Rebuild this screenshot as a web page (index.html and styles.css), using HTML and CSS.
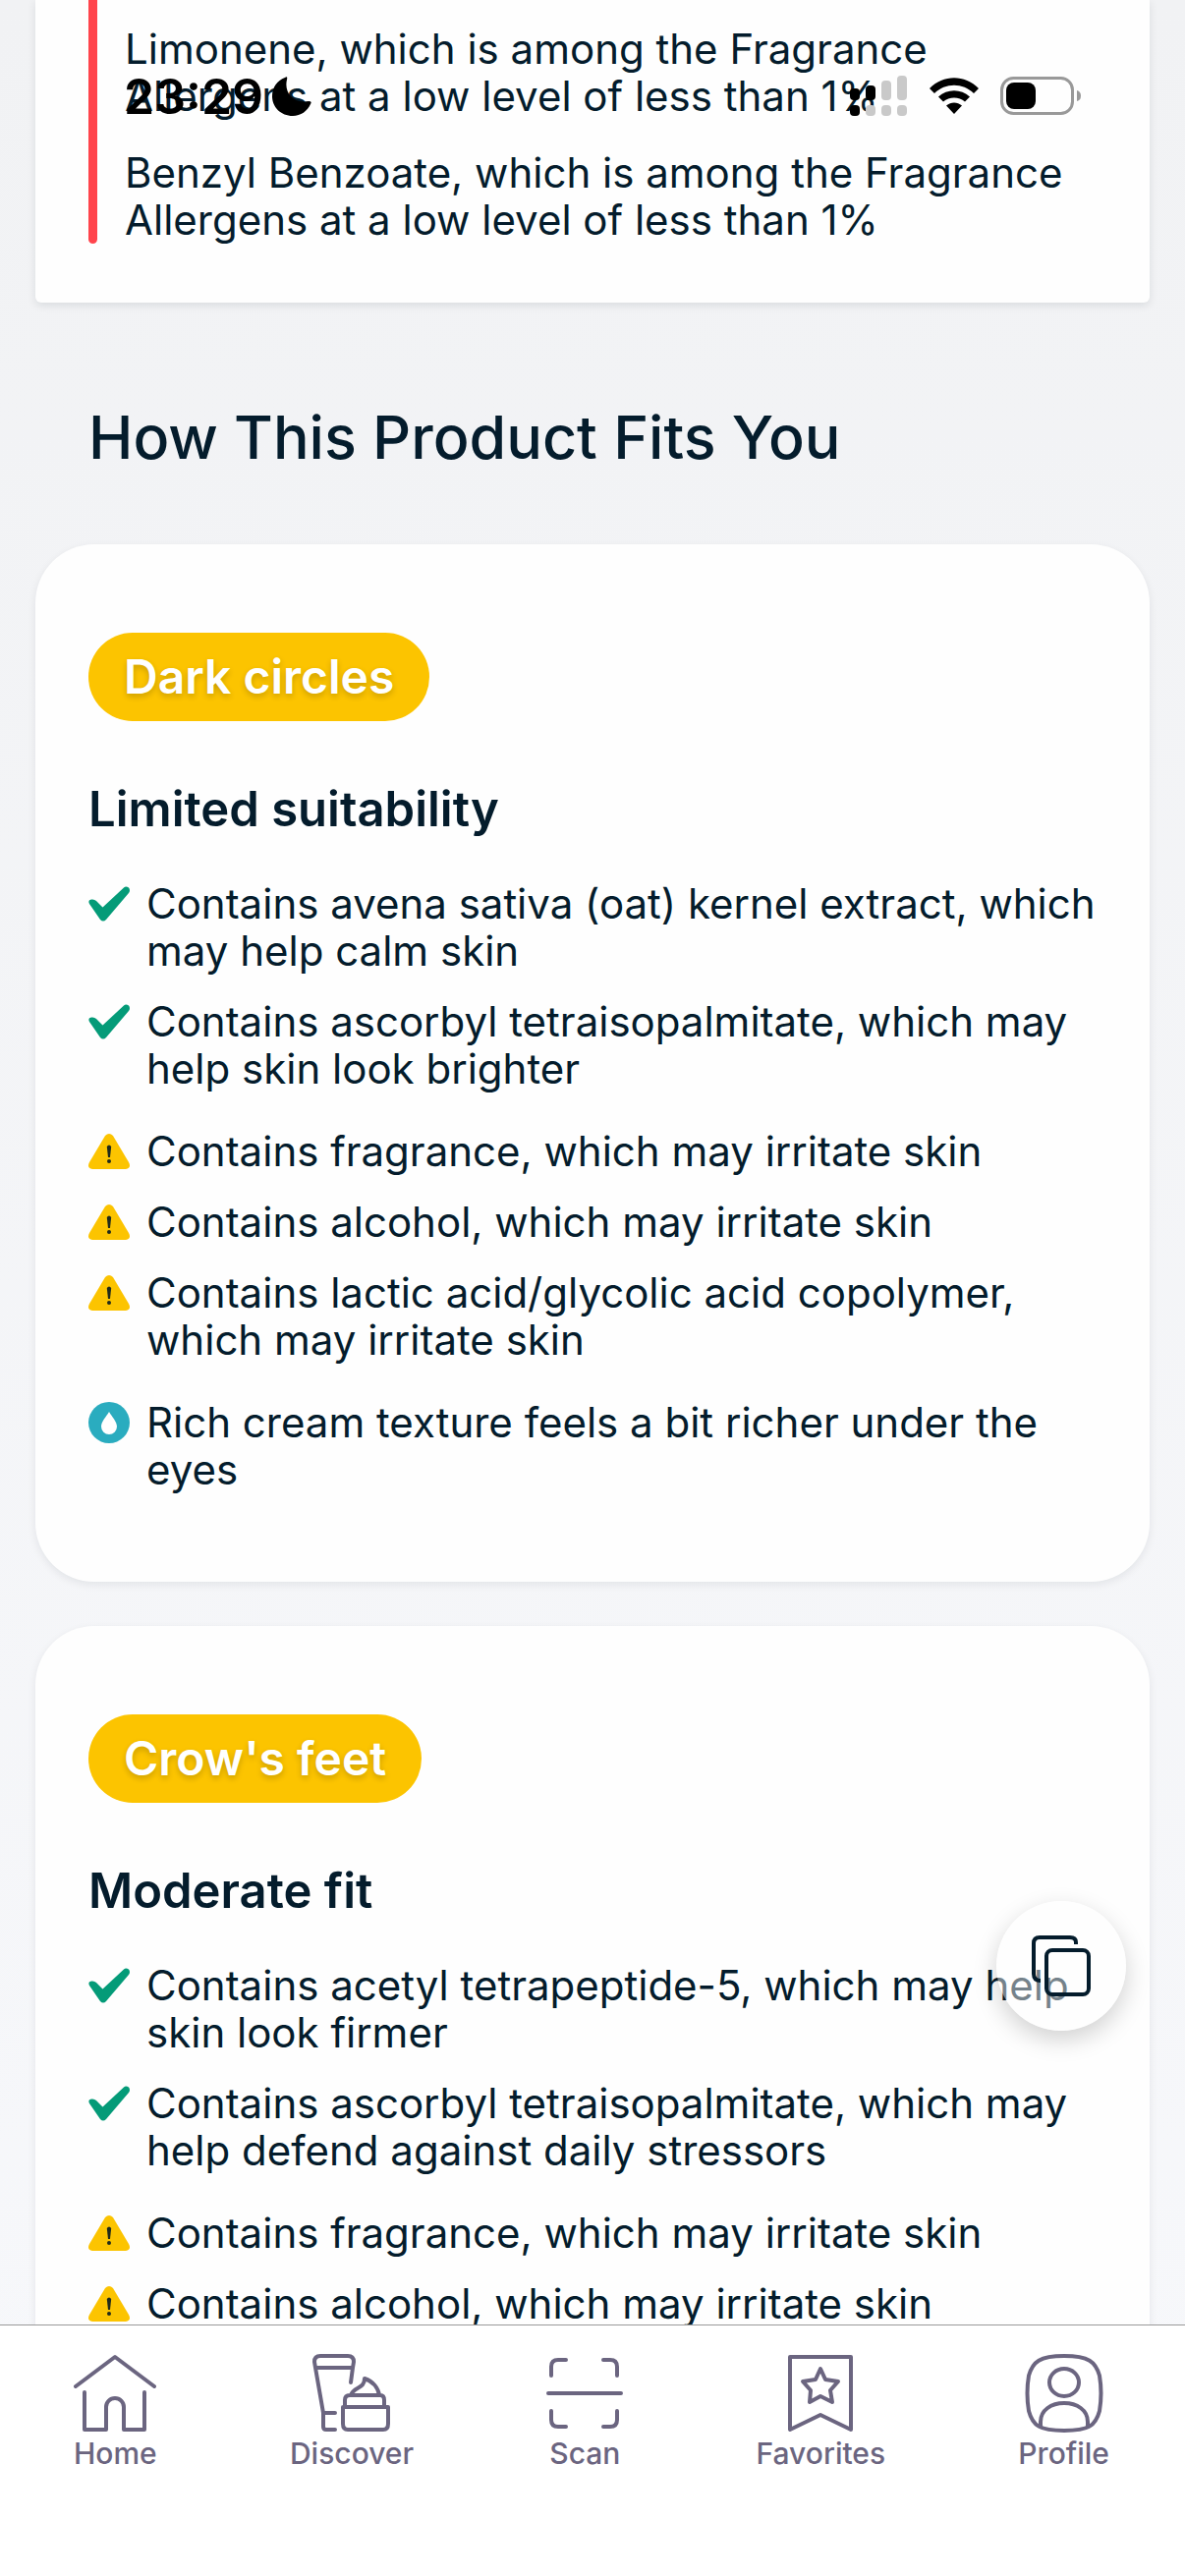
FILE: index.html
```html
<!DOCTYPE html>
<html lang="en">
<head>
    <meta charset="UTF-8">
    <meta name="viewport" content="width=device-width, initial-scale=1.0">
    <title>Product fit</title>
    <link rel="stylesheet" href="styles.css">
</head>
<body>
    <!-- Shared list icons -->
    <svg class="sprite" aria-hidden="true">
        <symbol id="check" viewBox="0 0 42 36">
            <path fill="#049b78" d="M1 18Q-1 14 3 13.500Q6 13 8 15L14.500 21.500L36 1.500Q38 -.5 41 1.500Q43 4 41 7L18 34Q15 37 12 34Z"/>
        </symbol>
        <symbol id="warning" viewBox="0 0 42 36">
            <path fill="#fcc400" d="M17 2Q21-2 25 2L41 29Q44 35 38 36H4Q-2 35 1 29Z"/>
            <path fill="#1f2a1c" d="M18.800 13Q21 10 23.200 13L22 24H20Z"/>
            <circle fill="#1f2a1c" cx="21" cy="28" r="2"/>
        </symbol>
        <symbol id="drop" viewBox="0 0 42 42">
            <circle fill="#2aacbf" cx="21" cy="21" r="21"/>
            <path fill="#fff" d="M21 10C24 15 29 20 29 25a8 8 0 0 1-16 0C13 20 18 15 21 10Z"/>
        </symbol>
    </svg>

    <header class="status-bar">
        <div class="status-left">
            <span class="time">23:29</span>
            <svg width="40" height="40" viewBox="0 0 40 40" aria-hidden="true">
                <path d="M13 1Q16-1 15 3C12 15 20 28 37 25Q41 25 39 28C36 35 29 40 21 40C9 40 0 31 0 20C0 11 5 4 13 1Z"/>
            </svg>
        </div>
        <div class="status-right">
            <svg width="59" height="42" viewBox="0 0 59 42" aria-hidden="true">
                <rect x="0" y="13" width="10" height="12" rx="4"/>
                <rect x="16" y="10" width="10" height="15" rx="4"/>
                <rect x="0" y="30" width="10" height="11" rx="4"/>
                <g fill="#c9c9c9">
                    <rect x="32" y="5" width="10" height="20" rx="4"/>
                    <rect x="48" y="0" width="10" height="25" rx="4"/>
                    <rect x="16" y="30" width="10" height="11" rx="4"/>
                    <rect x="32" y="30" width="10" height="11" rx="4"/>
                    <rect x="48" y="30" width="10" height="11" rx="4"/>
                </g>
            </svg>
            <svg width="50" height="38" viewBox="0 0 50 38" aria-hidden="true">
                <path d="M0 11C14-3.500 36-3.500 50 11L45 16C34 5 16 5 5 16Z"/>
                <path d="M9 19.500C18 11 32 11 41 19.500L36 24.500C30 19 20 19 14 24.500Z"/>
                <path d="M17 28.500C22 24.500 28 24.500 33 28.500L25 37Z"/>
            </svg>
            <svg width="82" height="40" viewBox="0 0 82 40" aria-hidden="true">
                <rect x="1.500" y="1.500" width="72" height="36" rx="12" fill="none" stroke="#999" stroke-width="3"/>
                <rect x="6" y="6" width="30" height="27" rx="8"/>
                <path fill="#999" d="M78 14Q82 15 82 19.500T78 25Z"/>
            </svg>
        </div>
    </header>

    <main class="content">
        <section class="notes-card">
            <div class="bar"></div>
            <div class="notes">
                <p>Limonene, which is among the Fragrance Allergens at a low level of less than 1%</p>
                <p>Benzyl Benzoate, which is among the Fragrance Allergens at a low level of less than 1%</p>
            </div>
        </section>

        <h1>How This Product Fits You</h1>

        <section class="card">
            <span class="pill">Dark circles</span>
            <h2>Limited suitability</h2>
            <ul>
                <li><svg class="icon"><use href="#check"/></svg>Contains avena sativa (oat) kernel extract, which may help calm skin</li>
                <li><svg class="icon"><use href="#check"/></svg>Contains ascorbyl tetraisopalmitate, which may help skin look brighter</li>
            </ul>
            <ul>
                <li><svg class="icon"><use href="#warning"/></svg>Contains fragrance, which may irritate skin</li>
                <li><svg class="icon"><use href="#warning"/></svg>Contains alcohol, which may irritate skin</li>
                <li><svg class="icon"><use href="#warning"/></svg>Contains lactic acid/glycolic acid copolymer, which may irritate skin</li>
            </ul>
            <ul>
                <li><svg class="icon round"><use href="#drop"/></svg>Rich cream texture feels a bit richer under the eyes</li>
            </ul>
        </section>

        <section class="card">
            <span class="pill">Crow's feet</span>
            <h2>Moderate fit</h2>
            <ul>
                <li><svg class="icon"><use href="#check"/></svg>Contains acetyl tetrapeptide-5, which may help skin look firmer</li>
                <li><svg class="icon"><use href="#check"/></svg>Contains ascorbyl tetraisopalmitate, which may help defend against daily stressors</li>
            </ul>
            <ul>
                <li><svg class="icon"><use href="#warning"/></svg>Contains fragrance, which may irritate skin</li>
                <li><svg class="icon"><use href="#warning"/></svg>Contains alcohol, which may irritate skin</li>
            </ul>
        </section>
    </main>

    <button class="compare" type="button" aria-label="Compare">
        <svg width="60" height="62" viewBox="0 0 60 62" aria-hidden="true">
            <path d="M45 9V7Q45 2 39 2H8Q2 2 2 8V39Q2 46 9 46"/>
            <rect x="15" y="15" width="43" height="45" rx="6"/>
        </svg>
    </button>

    <nav class="tab-bar">
        <a href="#home">
            <svg width="84" height="80" viewBox="0 0 84 80" aria-hidden="true">
                <path d="M2 33L42 3L82 33M11 39V77H33V54a9 9 0 0 1 18 0V77H72V39"/>
            </svg>
            Home
        </a>
        <a href="#discover">
            <svg width="80" height="80" viewBox="0 0 80 80" aria-hidden="true">
                <path d="M3 14L2 8Q2 2 8 2H36Q42 2 42 8L41 14ZM3 14L11 60V74Q11 77 14 77H23M11 60H23M41 14L39 29"/>
                <path d="M33 54V47Q33 42 38 42H69Q73 42 73 47V54M31 54H77V71Q77 77 72 77H36Q31 77 31 71ZM39 42C42 33 53 36 53 25C62 28 67 35 68 42"/>
            </svg>
            Discover
        </a>
        <a href="#scan">
            <svg width="78" height="80" viewBox="0 0 78 80" aria-hidden="true">
                <path d="M5 22V13Q5 6 12 6H20M58 6H65Q72 6 72 13V22M5 58V67Q5 74 12 74H20M58 74H65Q72 74 72 67V58M2 40H76"/>
            </svg>
            Scan
        </a>
        <a href="#favorites">
            <svg width="66" height="80" viewBox="0 0 66 80" aria-hidden="true">
                <path d="M2 3H64V77L33 62L2 77ZM33 15L38 26L51 28L43 37L45 49L33 43L22 49L23 37L15 28L28 26Z"/>
            </svg>
            Favorites
        </a>
        <a href="#profile">
            <svg width="80" height="80" viewBox="0 0 80 80" aria-hidden="true">
                <path d="M40 2C65 2 72 8 76 22Q79 40 76 58C72 73 65 78 40 78C15 78 8 73 4 58Q1 40 4 22C8 8 15 2 40 2Z"/>
                <ellipse cx="40" cy="29" rx="15" ry="14"/>
                <path d="M16 74V69C16 57 27 50 40 50S64 57 64 69V74"/>
            </svg>
            Profile
        </a>
    </nav>
</body>
</html>
```
FILE: styles.css
```css
* {
    box-sizing: border-box;
}
body {
    font-family: Inter, "Liberation Sans", sans-serif;
    font-size: 42px;
    line-height: 48px;
    color: #041c2c;
    margin: 0;
    height: 100vh;
    display: flex;
    flex-direction: column;
    position: relative;
    background: linear-gradient(#f1f2f4, #f7f8fb);
}
.sprite {
    display: none;
}

/* Status bar floats over the scrolled page */
.status-bar {
    position: absolute;
    top: 0;
    left: 0;
    right: 0;
    height: 196px;
    padding: 0 106px 0 126px;
    display: flex;
    justify-content: space-between;
    align-items: center;
    color: #000;
    z-index: 2;
}
.status-left {
    display: flex;
    align-items: center;
    gap: 9px;
}
.status-right {
    display: flex;
    align-items: center;
    gap: 22px;
}
.time {
    font-size: 50px;
    font-weight: 600;
}

.content {
    flex: 1;
    min-height: 0;
    overflow-y: auto;
    scrollbar-width: none;
    padding: 0 36px 48px;
}
.notes-card {
    display: flex;
    gap: 28px;
    padding: 0 54px 60px;
    background: #fefefe;
    border-radius: 0 0 6px 6px;
    box-shadow: 0 3px 9px rgba(4, 28, 44, 0.1);
}
.bar {
    width: 9px;
    flex-shrink: 0;
    background: #ff444c;
    border-radius: 0 0 5px 5px;
}
.notes {
    padding-top: 26px;
}
.notes p {
    margin: 0 0 30px;
}
.notes p:last-child {
    margin: 0;
}
h1 {
    font-size: 61px;
    font-weight: 500;
    line-height: 78px;
    margin: 98px 54px 70px;
}
.card {
    background: #fefefe;
    border-radius: 60px;
    padding: 90px 54px;
    margin-bottom: 45px;
    box-shadow: 0 3px 9px rgba(4, 28, 44, 0.08);
}
.pill {
    display: inline-block;
    height: 90px;
    line-height: 90px;
    padding: 0 36px;
    border-radius: 45px;
    background: #fcc400;
    color: #fff;
    font-size: 48px;
    font-weight: 600;
    text-shadow: 0 3px 6px rgba(0, 0, 0, 0.2);
    vertical-align: top;
}
h2 {
    font-size: 49px;
    font-weight: 600;
    line-height: 60px;
    margin: 60px 0 42px;
}
ul {
    list-style: none;
    margin: 0;
    padding: 0;
    display: flex;
    flex-direction: column;
    gap: 24px;
}
ul + ul {
    margin-top: 36px;
}
li {
    display: flex;
    align-items: flex-start;
    gap: 17px;
}
.icon {
    width: 42px;
    height: 36px;
    margin-top: 6px;
    flex-shrink: 0;
}
.icon.round {
    height: 42px;
    margin-top: 3px;
}

.compare {
    position: absolute;
    right: 60px;
    bottom: 555px;
    width: 132px;
    height: 132px;
    padding: 0;
    border: none;
    border-radius: 50%;
    background: rgba(255, 255, 255, 0.45);
    box-shadow: 0 9px 24px rgba(0, 0, 0, 0.18);
    display: flex;
    align-items: center;
    justify-content: center;
    cursor: pointer;
}
.compare svg {
    fill: none;
    stroke: #041c2c;
    stroke-width: 4;
    stroke-linejoin: round;
}

.tab-bar {
    height: 256px;
    padding: 29px 77px 0 75px;
    display: flex;
    justify-content: space-between;
    align-items: flex-start;
    background: #fff;
    border-top: 1px solid #999;
}
.tab-bar a {
    display: flex;
    flex-direction: column;
    align-items: center;
    gap: 3px;
    font-size: 30px;
    font-weight: 500;
    line-height: 36px;
    color: #6b6580;
    text-decoration: none;
}
.tab-bar svg {
    fill: none;
    stroke: #6b6580;
    stroke-width: 4;
    stroke-linecap: round;
    stroke-linejoin: round;
}
```
